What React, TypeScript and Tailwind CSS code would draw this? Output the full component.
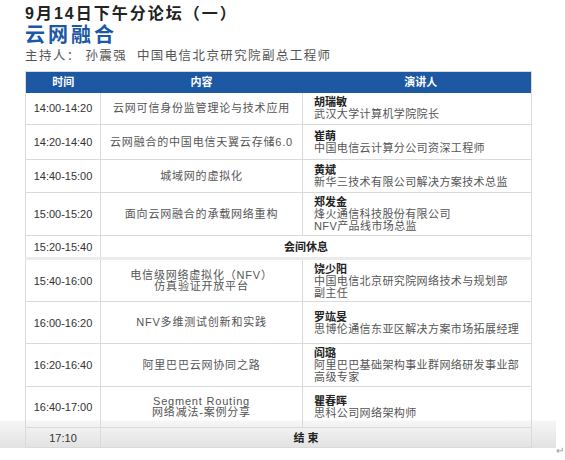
const font = "font-['Liberation_Sans','Noto_Sans_CJK_SC',sans-serif]";

const sessions = [
  {
    time: "14:00-14:20",
    topic: ["云网可信身份监管理论与技术应用"],
    name: "胡瑞敏",
    desc: ["武汉大学计算机学院院长"],
    h: "h-[32px]",
  },
  {
    time: "14:20-14:40",
    topic: ["云网融合的中国电信天翼云存储6.0"],
    name: "崔萌",
    desc: ["中国电信云计算分公司资深工程师"],
    h: "h-[35px]",
  },
  {
    time: "14:40-15:00",
    topic: ["城域网的虚拟化"],
    name: "黄斌",
    desc: ["新华三技术有限公司解决方案技术总监"],
    h: "h-[33px]",
  },
  {
    time: "15:00-15:20",
    topic: ["面向云网融合的承载网络重构"],
    name: "郑发金",
    desc: ["烽火通信科技股份有限公司", "NFV产品线市场总监"],
    h: "h-[43px]",
  },
  { time: "15:20-15:40", label: "会间休息", h: "h-[23px]" },
  {
    time: "15:40-16:00",
    topic: ["电信级网络虚拟化（NFV）", "仿真验证开放平台"],
    name: "饶少阳",
    desc: ["中国电信北京研究院网络技术与规划部", "副主任"],
    h: "h-[43px]",
  },
  {
    time: "16:00-16:20",
    topic: ["NFV多维测试创新和实践"],
    name: "罗竑旻",
    desc: ["思博伦通信东亚区解决方案市场拓展经理"],
    h: "h-[42px]",
  },
  {
    time: "16:20-16:40",
    topic: ["阿里巴巴云网协同之路"],
    name: "阎璐",
    desc: ["阿里巴巴基础架构事业群网络研发事业部", "高级专家"],
    h: "h-[43px]",
  },
  {
    time: "16:40-17:00",
    topic: ["Segment Routing", "网络减法-案例分享"],
    name: "瞿春晖",
    desc: ["思科公司网络架构师"],
    h: "h-[41px]",
  },
];

export default function App() {
  return (
    <div
      className={`${font} w-[565px] h-[460px] bg-white bg-no-repeat bg-[length:556px_100%] bg-[linear-gradient(to_bottom,#ffffff_0px,#ffffff_420px,#f6f6f6_421px,#e2e2e2_448px,#ffffff_448px)]`}
    >
      <div className="pl-[25px] pt-[4px]">
        <h1 className="text-[16px] leading-[20px] font-bold tracking-[2px] text-[#222]">
          9月14日下午分论坛（一）
        </h1>
        <h2 className="text-[20px] leading-[22px] font-bold tracking-[3px] text-[#1b58a6]">
          云网融合
        </h2>
        <p className="mt-[2px] text-[12.5px] leading-[16px] tracking-[1.4px] text-[#555]">
          主持人： 孙震强&nbsp;&nbsp;中国电信北京研究院副总工程师
        </p>
      </div>

      <div className="flex items-end mt-[7px] pl-[25px]">
        <table className="w-[506px] table-fixed border-collapse border border-[#dadada] text-[11px]">
          <colgroup>
            <col className="w-[75px]" />
            <col className="w-[202px]" />
            <col className="w-[229px]" />
          </colgroup>
          <thead>
            <tr className="h-[21px] bg-[#1d58a3] text-white font-bold">
              <th className="text-center font-bold leading-[13px]">时间</th>
              <th className="text-center font-bold leading-[13px]">内容</th>
              <th className="pl-[8px] text-center font-bold leading-[13px]">演讲人</th>
            </tr>
          </thead>
          <tbody>
            {sessions.map((s) =>
              s.label ? (
                <tr key={s.time} className={`${s.h} border-b-[3px] border-[#ebebeb]`}>
                  <td className="border-r border-[#dadada] text-center text-[#333] leading-[12px]">
                    {s.time}
                  </td>
                  <td colSpan={2} className="pr-[20px] text-center font-bold text-[#222] leading-[12px]">
                    {s.label}
                  </td>
                </tr>
              ) : (
                <tr key={s.time} className={`${s.h} border-b border-[#dadada]`}>
                  <td className="border-r border-[#dadada] text-center text-[#333] leading-[12px]">
                    {s.time}
                  </td>
                  <td className="border-r border-[#dadada] text-center text-[#555] tracking-[0.8px] leading-[11px]">
                    {s.topic?.map((t) => (
                      <div key={t}>{t}</div>
                    ))}
                  </td>
                  <td className="pl-[11px] text-[#555] tracking-[0.4px] leading-[12px]">
                    <div className="font-bold text-[#222] tracking-normal">{s.name}</div>
                    {s.desc?.map((d) => (
                      <div key={d}>{d}</div>
                    ))}
                  </td>
                </tr>
              )
            )}
            <tr className="h-[20px]">
              <td className="border-r border-[#dadada] text-center text-[#333] leading-[12px]">
                17:10
              </td>
              <td colSpan={2} className="pr-[20px] text-center font-bold text-[#222] leading-[12px]">
                结 束
              </td>
            </tr>
          </tbody>
        </table>
        <span className="ml-[24px] mb-[-8px] text-[10px] leading-[10px] text-[#999]">↵</span>
      </div>
    </div>
  );
}
